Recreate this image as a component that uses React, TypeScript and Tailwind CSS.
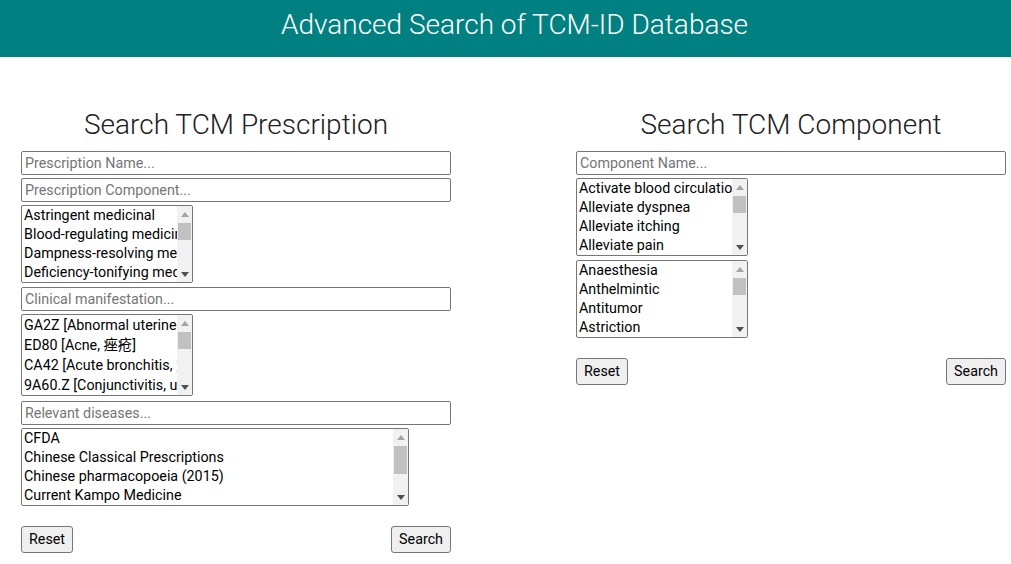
import React from 'react'

const font = { fontFamily: 'Roboto, "Noto Sans CJK SC", sans-serif' }

const prescriptionTypes = [
  'Astringent medicinal',
  'Blood-regulating medicinal',
  'Dampness-resolving medicinal',
  'Deficiency-tonifying medicinal',
  'Exterior-releasing medicinal',
  'Heat-clearing medicinal',
]

const manifestations = [
  'GA2Z [Abnormal uterine bleeding, 异常子宫出血]',
  'ED80 [Acne, 痤疮]',
  'CA42 [Acute bronchitis, 急性支气管炎]',
  '9A60.Z [Conjunctivitis, unspecified, 结膜炎]',
  'DA42 [Gastritis, 胃炎]',
]

const sources = [
  'CFDA',
  'Chinese Classical Prescriptions',
  'Chinese pharmacopoeia (2015)',
  'Current Kampo Medicine',
  'Hong Kong Chinese Materia Medica Standards',
]

const effects = [
  'Activate blood circulation',
  'Alleviate dyspnea',
  'Alleviate itching',
  'Alleviate pain',
  'Anti-inflammation',
]

const actions = ['Anaesthesia', 'Anthelmintic', 'Antitumor', 'Astriction', 'Antibacterial']

function TextField({ placeholder }: { placeholder: string }) {
  return (
    <input
      type="text"
      placeholder={placeholder}
      className="block w-full h-[24px] px-[3px] border border-[#767676] rounded-[2px] bg-white text-[14.3px] text-black placeholder:text-[#757575] outline-none"
    />
  )
}

function Arrow({ up }: { up?: boolean }) {
  return (
    <div className="h-[16px] w-full flex items-center justify-center">
      <svg width="8" height="5" viewBox="0 0 8 5">
        {up ? (
          <polygon points="0,5 8,5 4,0" fill="#a3a3a3" />
        ) : (
          <polygon points="0,0 8,0 4,5" fill="#505050" />
        )}
      </svg>
    </div>
  )
}

interface ListBoxProps {
  items: string[]
  box: string
  row: string
  thumb: string
}

// listbox look-alike: clipped rows + classic scrollbar
function ListBox({ items, box, row, thumb }: ListBoxProps) {
  return (
    <div className={`flex ${box} border border-[#767676] rounded-[2px] bg-white overflow-hidden`}>
      <div className="flex-1 min-w-0 overflow-hidden text-[14.3px] text-black">
        {items.map((item) => (
          <div key={item} className={`${row} pl-[2px] whitespace-nowrap overflow-hidden`}>
            {item}
          </div>
        ))}
      </div>
      <div className="w-[15px] bg-[#f1f1f1] flex flex-col items-center">
        <Arrow up />
        <div className={`mt-[1px] w-[13px] ${thumb} bg-[#c1c1c1]`} />
        <div className="flex-1" />
        <Arrow />
      </div>
    </div>
  )
}

function Button({ children }: { children: React.ReactNode }) {
  return (
    <button className="h-[27px] px-[7px] border border-[#767676] rounded-[3px] bg-[#efefef] text-[14.3px] text-black">
      {children}
    </button>
  )
}

export default function App() {
  return (
    <div className="min-h-screen bg-white" style={font}>
      <header className="h-[57px] bg-[#008080] flex items-center justify-center pl-[18px]">
        <h1 className="text-[28px] font-light text-white leading-none pb-[8px]">
          Advanced Search of TCM-ID Database
        </h1>
      </header>

      <div className="flex pl-[21px] pr-[5px] gap-[125px]">
        <section className="w-[430px]">
          <h2 className="mt-[51px] mb-[9px] text-center text-[28px] font-light leading-[34px] text-[#212121]">
            Search TCM Prescription
          </h2>
          <div className="flex flex-col">
            <TextField placeholder="Prescription Name..." />
            <div className="mt-[3px]">
              <TextField placeholder="Prescription Component..." />
            </div>
            <div className="mt-[3px]">
              <ListBox items={prescriptionTypes} box="w-[172px] h-[78px]" row="h-[19px] leading-[19px]" thumb="h-[17px]" />
            </div>
            <div className="mt-[4px]">
              <TextField placeholder="Clinical manifestation..." />
            </div>
            <div className="mt-[3px]">
              <ListBox items={manifestations} box="w-[172px] h-[82px]" row="h-[20px] leading-[20px]" thumb="h-[17px]" />
            </div>
            <div className="mt-[5px]">
              <TextField placeholder="Relevant diseases..." />
            </div>
            <div className="mt-[3px]">
              <ListBox items={sources} box="w-[388px] h-[78px]" row="h-[19px] leading-[19px]" thumb="h-[28px]" />
            </div>
            <div className="mt-[20px] flex justify-between">
              <Button>Reset</Button>
              <Button>Search</Button>
            </div>
          </div>
        </section>

        <section className="w-[430px]">
          <h2 className="mt-[51px] mb-[9px] text-center text-[28px] font-light leading-[34px] text-[#212121]">
            Search TCM Component
          </h2>
          <div className="flex flex-col">
            <TextField placeholder="Component Name..." />
            <div className="mt-[3px]">
              <ListBox items={effects} box="w-[172px] h-[78px]" row="h-[19px] leading-[19px]" thumb="h-[17px]" />
            </div>
            <div className="mt-[4px]">
              <ListBox items={actions} box="w-[172px] h-[78px]" row="h-[19px] leading-[19px]" thumb="h-[17px]" />
            </div>
            <div className="mt-[20px] flex justify-between">
              <Button>Reset</Button>
              <Button>Search</Button>
            </div>
          </div>
        </section>
      </div>
    </div>
  )
}
